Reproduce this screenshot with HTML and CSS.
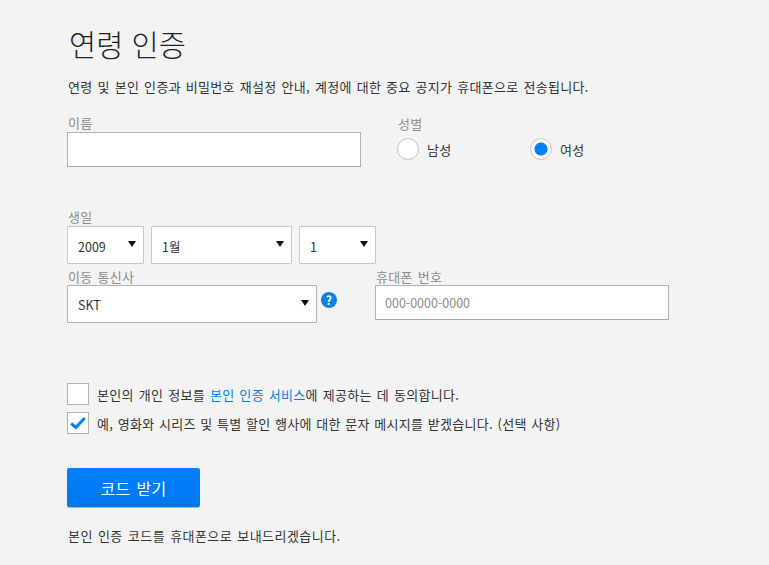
FILE: index.html
```html
<!DOCTYPE html>
<html lang="ko">
<head>
  <meta charset="UTF-8">
  <title>연령 인증</title>
  <link rel="stylesheet" href="styles.css">
</head>
<body>

<div class="page">
  <h1>연령 인증</h1>
  <p class="intro">연령 및 본인 인증과 비밀번호 재설정 안내, 계정에 대한 중요 공지가 휴대폰으로 전송됩니다.</p>

  <div class="row name-row">
    <div class="name-field">
      <div class="label">이름</div>
      <div class="input name-input"></div>
    </div>
    <div class="gender-field">
      <div class="label">성별</div>
      <div class="radios">
        <div class="radio-item male">
          <span class="radio"></span>
          <span>남성</span>
        </div>
        <div class="radio-item">
          <span class="radio checked"></span>
          <span>여성</span>
        </div>
      </div>
    </div>
  </div>

  <div class="birth-field">
    <div class="label">생일</div>
    <div class="birth-selects">
      <div class="select year">2009</div>
      <div class="select month">1월</div>
      <div class="select day">1</div>
    </div>
  </div>

  <div class="row carrier-row">
    <div class="carrier-field">
      <div class="label">이동 통신사</div>
      <div class="carrier-line">
        <div class="select carrier">SKT</div>
        <span class="help">?</span>
      </div>
    </div>
    <div class="phone-field">
      <div class="label">휴대폰 번호</div>
      <div class="input phone-input">000-0000-0000</div>
    </div>
  </div>

  <div class="checks">
    <div class="check-item">
      <span class="checkbox"></span>
      <span>본인의 개인 정보를 <a href="#">본인 인증 서비스</a>에 제공하는 데 동의합니다.</span>
    </div>
    <div class="check-item">
      <span class="checkbox">
        <svg width="16" height="14" viewBox="0 0 16 14"><path d="M1.2 7.5 L5.8 11.5 L14.8 2" fill="none" stroke="#0080ff" stroke-width="3"/></svg>
      </span>
      <span class="sms-text">예, 영화와 시리즈 및 특별 할인 행사에 대한 문자 메시지를 받겠습니다. (선택 사항)</span>
    </div>
  </div>

  <button class="submit-btn">코드 받기</button>
  <p class="note">본인 인증 코드를 휴대폰으로 보내드리겠습니다.</p>
</div>

</body>
</html>
```

FILE: styles.css
```css
html, body {
  height: 100%;
}

body {
  margin: 0;
  background: #f3f3f3;
  color: #333;
  font-family: "Noto Sans CJK KR", "Open Sans", sans-serif;
  font-size: 13px;
  letter-spacing: 0.3px;
  word-spacing: 1px;
  overflow: hidden;
}

.page {
  padding: 22px 0 0 67px;
}

h1 {
  margin: 0 0 0 2px;
  font-size: 29.5px;
  font-weight: 300;
  letter-spacing: 0;
  word-spacing: 0;
  line-height: 42px;
  color: #222;
}

.intro {
  margin: 13px 0 0 1px;
  line-height: 20px;
}

.row {
  display: flex;
}

.label {
  height: 14px;
  line-height: 14px;
  font-size: 13px;
  color: #8c8c8c;
  padding-left: 1px;
}

.input {
  box-sizing: border-box;
  background: white;
  border: 1px solid #b3b3b3;
  border-bottom-color: #a6a6a6;
}

.name-row {
  margin-top: 19px;
}

.name-input {
  width: 294px;
  height: 35px;
  margin-top: 2px;
}

.gender-field {
  margin-left: 36px;
  padding-top: 1px;
}

.radios {
  display: flex;
  margin-top: 7px;
}

.radio-item {
  display: flex;
  align-items: center;
  gap: 8px;
  height: 22px;
}

.male {
  width: 133px;
}

.radio {
  box-sizing: border-box;
  width: 22px;
  height: 22px;
  background: white;
  border: 1px solid #c4c4c4;
  border-radius: 50%;
}

.radio.checked {
  background: radial-gradient(circle, #0080ff 0, #0080ff 6px, white 7px);
}

.birth-field {
  margin-top: 43px;
}

.birth-selects {
  display: flex;
  gap: 7px;
  margin-top: 2px;
}

.select {
  box-sizing: border-box;
  position: relative;
  display: flex;
  align-items: center;
  height: 38px;
  padding: 2px 0 0 10px;
  background: white;
  border: 1px solid #c9c9c9;
  border-radius: 1px;
  color: #333;
  font-size: 12.5px;
  letter-spacing: 0;
}

/* dropdown arrow */
.select::after {
  content: "";
  position: absolute;
  top: 14px;
  right: 7px;
  border-top: 6px solid #111;
  border-left: 4.5px solid transparent;
  border-right: 4.5px solid transparent;
}

.year { width: 77px; }
.month { width: 141px; }
.day { width: 77px; }

.carrier-row {
  margin-top: 6px;
}

.carrier-line {
  display: flex;
  gap: 4px;
  margin-top: 1px;
}

.carrier {
  width: 250px;
  padding-top: 1px;
  border-color: #b3b3b3;
}

.help {
  width: 16px;
  height: 16px;
  margin-top: 7px;
  border-radius: 50%;
  background: #0a84e0;
  color: white;
  font-size: 12px;
  font-weight: 700;
  line-height: 16px;
  text-align: center;
}

.phone-field {
  margin-left: 38px;
}

.phone-input {
  width: 294px;
  height: 35px;
  margin-top: 1px;
  padding-left: 9px;
  font-size: 12.5px;
  letter-spacing: 0;
  line-height: 34px;
  color: #8c8c8c;
}

.checks {
  margin-top: 60px;
}

.check-item {
  display: flex;
  align-items: center;
  gap: 8px;
  height: 22px;
  margin-bottom: 7px;
}

.sms-text {
  word-spacing: 0.55px;
}

.checkbox {
  box-sizing: border-box;
  display: flex;
  align-items: center;
  justify-content: center;
  width: 22px;
  height: 22px;
  background: white;
  border: 1px solid #b3b3b3;
}

a {
  color: #0080ff;
  text-decoration: none;
}

.submit-btn {
  display: block;
  width: 133px;
  height: 39px;
  margin-top: 34px;
  padding: 0;
  background: linear-gradient(to bottom, #0080ff, #0277ec);
  border: none;
  border-radius: 2px;
  box-shadow: 0 1px 0 rgba(0,0,0,0.25);
  color: white;
  font-family: inherit;
  font-size: 16px;
  letter-spacing: 0.3px;
  word-spacing: 1px;
}

.note {
  margin: 19px 0 0 1px;
  letter-spacing: 0.45px;
  line-height: 20px;
}
```
